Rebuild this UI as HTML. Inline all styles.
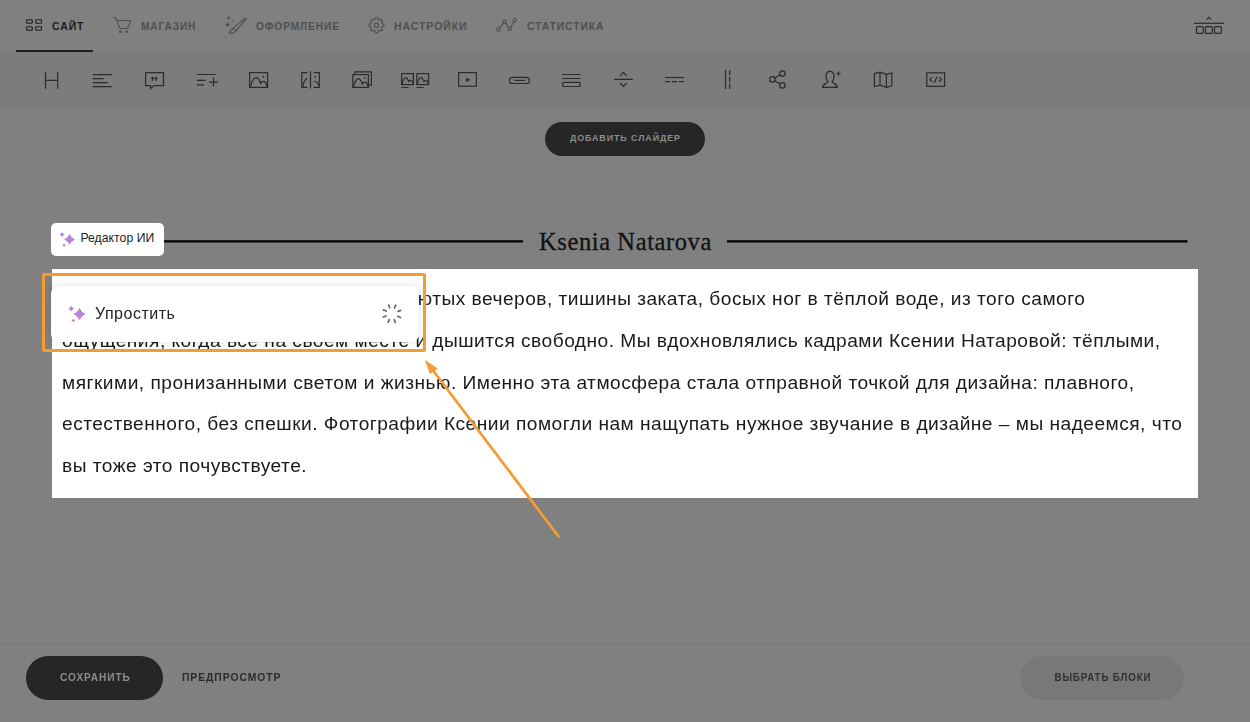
<!DOCTYPE html>
<html lang="ru">
<head>
<meta charset="utf-8">
<title>Редактор ИИ</title>
<style>
*{box-sizing:border-box;margin:0;padding:0}
html,body{width:1250px;height:722px;overflow:hidden;background:#808080;font-family:"Liberation Sans",sans-serif;}
.abs{position:absolute}
#hdr{position:absolute;left:0;top:0;width:1250px;height:52px;background:#808080;}
#tb{position:absolute;left:0;top:52px;width:1250px;height:56px;background:#7c7c7c;border-top:1px solid #7a7a7a;}
.nav{position:absolute;top:17.5px;height:16px;line-height:16px;font-size:11.5px;font-weight:bold;letter-spacing:1px;color:#4f4f4f;white-space:nowrap;transform-origin:0 50%;transform:scaleX(.85)}
.nav.act{color:#1c1c1c}
#uline{position:absolute;left:16px;top:50px;width:77px;height:2px;background:#1e1e1e}
svg{position:absolute;overflow:visible}
.ic{fill:none;stroke:#2b2b2b;stroke-width:1.2;stroke-linecap:butt;stroke-linejoin:miter}
.icg{fill:none;stroke:#4f4f4f;stroke-width:1.1;}
#hr1{position:absolute;left:0;top:138px;width:1250px;height:1px;background:#7b7b7b}
.pill{position:absolute;border-radius:30px;background:#262626;color:#8c8c8c;font-weight:bold;text-align:center;white-space:nowrap;letter-spacing:1px}
.pill span{display:inline-block;transform:scaleX(.86);padding-left:1px}
#ttl{position:absolute;left:539px;top:227px;height:30px;line-height:30px;font-family:"Liberation Serif",serif;font-size:24.5px;letter-spacing:.6px;color:#121212;white-space:nowrap;-webkit-text-stroke:.3px #121212}
.tl{position:absolute;top:240px;height:2px;background:#000}
#badge{position:absolute;left:51px;top:223px;width:113px;height:33px;background:#fff;border-radius:5px;}
#badge span{position:absolute;left:29.4px;top:7px;font-size:12.2px;letter-spacing:.05px;line-height:16px;color:#222;white-space:nowrap}
#block{position:absolute;left:52px;top:269px;width:1146px;height:229px;background:#fff}
.ln{will-change:transform;position:absolute;left:10px;height:41.8px;line-height:41.8px;font-size:19.16px;color:#1a1a1a;white-space:nowrap;letter-spacing:.48px}
#orange{position:absolute;left:42px;top:273px;width:384px;height:79px;border:3px solid #f39c33;border-radius:2px}
#pop{position:absolute;left:51px;top:286px;width:368px;height:56px;background:#fff;border-radius:8px;box-shadow:0 0 10px rgba(0,0,0,.12)}
#pop span{position:absolute;left:44px;top:18px;will-change:transform;font-size:16px;letter-spacing:.5px;line-height:20px;color:#242424;white-space:nowrap}
#ftline{position:absolute;left:0;top:644px;width:1250px;height:1px;background:#787878}
</style>
</head>
<body>
<div id="hdr"></div>
<div id="tb"></div>
<div id="uline"></div>
<div class="nav act" style="left:51.5px;transform:scaleX(.91)">САЙТ</div>
<div class="nav" style="left:141px;transform:scaleX(.88)">МАГАЗИН</div>
<div class="nav" style="left:256px;transform:scaleX(.885)">ОФОРМЛЕНИЕ</div>
<div class="nav" style="left:393.5px;transform:scaleX(.915)">НАСТРОЙКИ</div>
<div class="nav" style="left:527px;transform:scaleX(.90)">СТАТИСТИКА</div>

<svg id="icons" style="left:0;top:0" width="1250" height="110" viewBox="0 0 1250 110">
<!-- nav: grid -->
<g fill="none" stroke="#202020" stroke-width="1.15">
<rect x="26.65" y="19.75" width="5.6" height="3.5" rx=".7"/><rect x="35.8" y="19.75" width="5.7" height="3.5" rx=".7"/>
<rect x="26.65" y="26.75" width="5.6" height="3.5" rx=".7"/><rect x="35.8" y="26.75" width="5.7" height="3.5" rx=".7"/>
</g>
<g class="icg">
<!-- cart -->
<path d="M113.2 17.7 L116 18.2 L120 28.5 L127.6 28.5 L130.6 20.5 L117 20.5"/>
<rect x="119.7" y="31.2" width="1.2" height="1.2" fill="#4f4f4f"/><rect x="126" y="31.2" width="1.2" height="1.2" fill="#4f4f4f"/>
<!-- brush -->
<path d="M233.2 28.4 L245.2 17.9 Q246.3 17.6 246 18.9 L236 30.8" stroke-linejoin="round"/>
<path d="M233.2 28.4 C230.6 29.4 229.6 31.4 229.3 33.3 C231.6 33.5 234.6 32.9 236 30.8 Z" stroke-linejoin="round"/>
<path d="M228.70 16.00 Q229.05 17.65 230.70 18.00 Q229.05 18.35 228.70 20.00 Q228.35 18.35 226.70 18.00 Q228.35 17.65 228.70 16.00Z M227.40 21.90 Q227.87 24.13 230.10 24.60 Q227.87 25.07 227.40 27.30 Q226.93 25.07 224.70 24.60 Q226.93 24.13 227.40 21.90Z" fill="#4f4f4f" stroke="none"/>
<circle cx="233.1" cy="21.4" r=".8" fill="#4f4f4f" stroke="none"/>
<!-- gear -->
<circle cx="376.5" cy="25.3" r="2.2"/>
<path d="M375.56 17.76 L377.44 17.76 L378.06 19.51 L379.42 20.08 L381.10 19.27 L382.43 20.60 L381.62 22.28 L382.19 23.64 L383.94 24.26 L383.94 26.14 L382.19 26.76 L381.62 28.12 L382.43 29.80 L381.10 31.13 L379.42 30.32 L378.06 30.89 L377.44 32.64 L375.56 32.64 L374.94 30.89 L373.58 30.32 L371.90 31.13 L370.57 29.80 L371.38 28.12 L370.81 26.76 L369.06 26.14 L369.06 24.26 L370.81 23.64 L371.38 22.28 L370.57 20.60 L371.90 19.27 L373.58 20.08 L374.94 19.51 Z" stroke-linejoin="round"/>
<!-- stats -->
<circle cx="498.4" cy="29.4" r="1.7"/><circle cx="504.6" cy="21.8" r="1.7"/><circle cx="509.7" cy="28.7" r="1.7"/><circle cx="514.7" cy="20.2" r="1.7"/>
<path d="M499.5 28.1 L503.5 23.1 M505.6 23.2 L508.7 27.3 M510.6 27.2 L513.8 21.7"/>
</g>
<!-- top right -->
<g class="ic" stroke-width="1.1">
<path d="M1206.6 19.6 L1208.9 17.4 L1211.2 19.6"/>
<path d="M1194 23.3 L1224 23.3"/>
<rect x="1196.5" y="26.6" width="6.8" height="6.8" rx="1"/><rect x="1205.5" y="26.6" width="6.8" height="6.8" rx="1"/><rect x="1214.5" y="26.6" width="6.8" height="6.8" rx="1"/>
</g>
<!-- toolbar -->
<g class="ic">
<!-- H -->
<path d="M45.5 72 V88.8 M57.7 72 V88.8 M45.5 80.3 H57.7"/>
<!-- align -->
<path d="M92.7 74.6 H111.8 M92.7 78.6 H103.6 M92.7 82.6 H107.6 M92.7 86.6 H111.8"/>
<!-- quote -->
<path d="M145.6 72.6 H163.5 V85.6 H154.2 L150.6 88.4 V85.6 H145.6 Z"/>
<path d="M151.3 77.1 H153.8 V78.8 L152.6 81.2 H151.7 L152.3 79.2 H151.3 Z M154.8 77.1 H157.3 V78.8 L156.1 81.2 H155.2 L155.8 79.2 H154.8 Z" fill="#2b2b2b" stroke="none"/>
<!-- list plus -->
<path d="M197 74.5 H215.6 M197 80.3 H205.6 M197 84.8 H204 M209 82.1 H218 M213.5 77.6 V86.6"/>
<!-- image -->
<rect x="249.6" y="72.6" width="18" height="14.8"/>
<path d="M250.6 86.6 C252 80 254.5 77.6 256.4 77.6 C258.6 77.6 259.6 80.6 260.6 83.4 C261.6 82 262.4 81.4 263.4 81.4 C265 81.4 266.4 83.6 267 86.4"/>
<circle cx="263.2" cy="76.8" r=".9" fill="#2b2b2b" stroke="none"/>
<!-- split image -->
<path d="M307.3 72.6 H301.8 V87.3 H307.3 M310.5 71.2 V88.4 M313.7 72.6 H319.3 V87.3 H313.7"/>
<path d="M302.8 86.6 C303.4 82.4 305 79.6 307.2 78.2 M313.8 81 C316.6 81.6 318.4 83.6 319.2 86"/>
<circle cx="315.2" cy="76.8" r=".9" fill="#2b2b2b" stroke="none"/>
<!-- gallery -->
<path d="M354.8 74.4 V71.8 H371.4 V85.2 H368.6"/>
<rect x="352.8" y="74.6" width="15.6" height="12.8"/>
<path d="M353.6 86.8 C354.8 81.4 356.8 78.8 358.6 78.8 C360.6 78.8 361.6 81.6 362.4 84 C363.2 82.8 364 82.2 364.8 82.2 C366.2 82.2 367.4 84 368 86.6"/>
<circle cx="364.9" cy="77.9" r=".9" fill="#2b2b2b" stroke="none"/>
<!-- two images -->
<rect x="401.6" y="73.6" width="11.8" height="11"/><rect x="416.8" y="73.6" width="11.8" height="11"/>
<path d="M402.2 84 C403 79.8 404.4 77.6 405.8 77.6 C407.4 77.6 408 79.8 408.8 81.6 C409.4 80.8 410 80.4 410.6 80.4 C411.8 80.4 412.6 81.8 413.2 83.6"/>
<path d="M417.4 84 C418.2 79.8 419.6 77.6 421 77.6 C422.6 77.6 423.2 79.8 424 81.6 C424.6 80.8 425.2 80.4 425.8 80.4 C427 80.4 427.8 81.8 428.4 83.6"/>
<path d="M401.4 87.5 H408.6 M416.6 87.5 H423.8"/>
<!-- video -->
<rect x="458.6" y="72.6" width="17.8" height="13.6"/>
<path d="M466 77.4 L470.2 79.7 L466 82 Z" fill="#2b2b2b" stroke="none"/>
<!-- link pill -->
<rect x="509.4" y="77.3" width="20" height="6.2" rx="3.1"/>
<path d="M514.2 80.4 H524.8"/>
<!-- lines + pill -->
<path d="M562 74.5 H580.6 M562 78.5 H580.6"/>
<rect x="562.4" y="82.3" width="18" height="4.2" rx="2.1"/>
<!-- spacer -->
<path d="M614.1 79.3 H632.9 M620 75.8 L623.4 72.4 L626.8 75.8 M620 83 L623.4 86.4 L626.8 83"/>
<!-- dashes -->
<path d="M665 77.5 H684"/><path d="M665 81.6 H684" stroke-dasharray="5.2 1.7"/>
<!-- vertical -->
<path d="M725.5 70 V89"/><path d="M729.7 70 V89" stroke-dasharray="5.2 1.7"/>
<!-- share -->
<circle cx="782.4" cy="73.6" r="2.7"/><circle cx="772.4" cy="79.4" r="2.7"/><circle cx="782.4" cy="85.4" r="2.7"/>
<path d="M774.8 78 L780 75 M774.8 80.8 L780 84"/>
<!-- user plus -->
<path d="M830 71.4 C827.6 71.4 826 73.4 826 76.4 C826 78.6 826.8 80.6 828 81.6 C828 83.4 822.6 83.6 822.6 87.4 H837.4 C837.4 83.6 832 83.4 832 81.6 C833.2 80.6 834 78.6 834 76.4 C834 73.4 832.4 71.4 830 71.4 Z"/>
<path d="M836.4 73.7 H840.6 M838.5 71.6 V75.8" stroke-width="1"/>
<!-- map -->
<path d="M874.4 73.6 L880 72.2 L886.4 74.4 L891.8 73 V85.8 L886.4 87.4 L880 85.2 L874.4 86.6 Z M880 72.2 V85.2 M886.4 74.4 V87.4"/>
<!-- code -->
<rect x="926.8" y="72.8" width="17.8" height="13.6"/>
<path d="M932.4 77.4 L929.8 79.6 L932.4 81.8 M939 77.4 L941.6 79.6 L939 81.8 M937 76.6 L934.4 82.8" stroke-width="1.2"/>
</g>
</svg>
<div id="hr1"></div>
<div class="pill" style="left:545px;top:122px;width:160px;height:34px;line-height:32.6px;font-size:9.7px"><span style="transform:scaleX(.918)">ДОБАВИТЬ СЛАЙДЕР</span></div>
<svg style="left:0;top:230px" width="1250" height="20"><path d="M164 11.4 H523 M727 11.4 H1187.5" stroke="#000" stroke-width="2.1" fill="none"/></svg>
<div id="ttl">Ksenia Natarova</div>
<div id="badge"><span>Редактор ИИ</span></div>
<div id="block">
<div class="ln" style="top:9px">Этот шаблон родился из мгновений: уютых вечеров, тишины заката, босых ног в тёплой воде, из того самого</div>
<div class="ln" style="top:50.8px">ощущения, когда всё на своём месте и дышится свободно. Мы вдохновлялись кадрами Ксении Натаровой: тёплыми,</div>
<div class="ln" style="top:92.6px">мягкими, пронизанными светом и жизнью. Именно эта атмосфера стала отправной точкой для дизайна: плавного,</div>
<div class="ln" style="top:134.4px">естественного, без спешки. Фотографии Ксении помогли нам нащупать нужное звучание в дизайне – мы надеемся, что</div>
<div class="ln" style="top:176.2px">вы тоже это почувствуете.</div>
</div>
<div id="pop"><span>Упростить</span></div>
<svg style="left:0;top:0" width="1250" height="722"><path fill="#b885d7" d="M69.55 234.00 Q71.17 237.78 74.95 239.40 Q71.17 241.02 69.55 244.80 Q67.93 241.02 64.15 239.40 Q67.93 237.78 69.55 234.00Z M62.15 231.90 Q62.93 233.72 64.75 234.50 Q62.93 235.28 62.15 237.10 Q61.37 235.28 59.55 234.50 Q61.37 233.72 62.15 231.90Z M64.05 243.40 Q64.59 244.66 65.85 245.20 Q64.59 245.74 64.05 247.00 Q63.51 245.74 62.25 245.20 Q63.51 244.66 64.05 243.40Z"/><path fill="#b885d7" d="M79.50 308.00 Q81.31 312.24 85.55 314.05 Q81.31 315.86 79.50 320.10 Q77.69 315.86 73.45 314.05 Q77.69 312.24 79.50 308.00Z M71.21 305.65 Q72.09 307.69 74.12 308.56 Q72.09 309.44 71.21 311.47 Q70.34 309.44 68.30 308.56 Q70.34 307.69 71.21 305.65Z M73.34 318.53 Q73.94 319.94 75.36 320.55 Q73.94 321.15 73.34 322.56 Q72.74 321.15 71.32 320.55 Q72.74 319.94 73.34 318.53Z"/><g stroke="#666" stroke-width="1.7" stroke-linecap="round"><line x1="389.68" y1="307.72" x2="388.65" y2="305.01"/><line x1="394.57" y1="307.86" x2="395.76" y2="305.22"/><line x1="397.93" y1="311.43" x2="400.64" y2="310.40"/><line x1="397.79" y1="316.32" x2="400.43" y2="317.51"/><line x1="394.22" y1="319.68" x2="395.25" y2="322.39"/><line x1="389.33" y1="319.54" x2="388.14" y2="322.18"/><line x1="385.97" y1="315.97" x2="383.26" y2="317.00"/><line x1="386.11" y1="311.08" x2="383.47" y2="309.89"/></g></svg>
<div id="orange"></div>
<svg id="arrow" style="left:0;top:0" width="1250" height="722"><line x1="558.5" y1="536.5" x2="432" y2="369" stroke="#f39c33" stroke-width="2.8" stroke-linecap="round"/><polygon points="424.7,359.8 437.5,368.5 430,374.2" fill="#f39c33"/></svg>
<div id="ftline"></div>
<div class="pill" style="left:26px;top:656px;width:137px;height:44px;line-height:42.5px;font-size:11px"><span style="transform:scaleX(.92)">СОХРАНИТЬ</span></div>
<div class="nav" style="left:182px;top:669px;color:#2a2a2a;font-size:11px;transform:scaleX(.94)">ПРЕДПРОСМОТР</div>
<div class="pill" style="left:1020px;top:656px;width:164px;height:44px;line-height:42px;font-size:11.5px;background:#787878;color:#303030"><span style="transform:scaleX(.85)">ВЫБРАТЬ БЛОКИ</span></div>
</body>
</html>
